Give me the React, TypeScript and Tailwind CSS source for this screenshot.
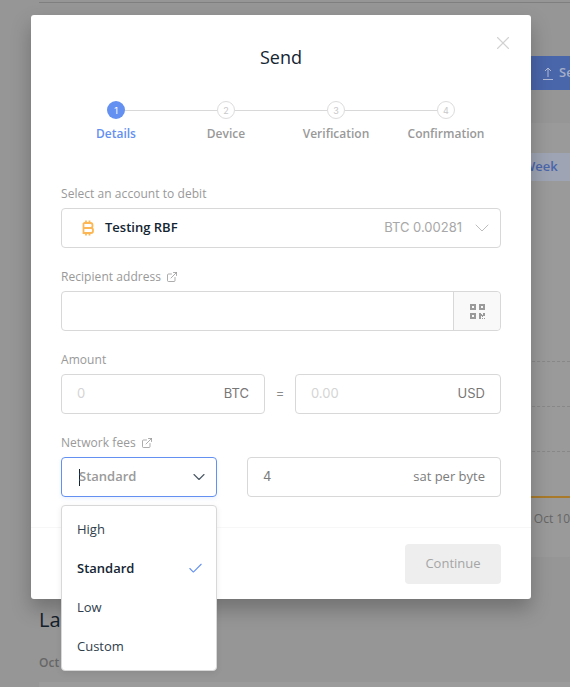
import { ExternalLink, ChevronDown, Check, X } from "lucide-react";

const font = "font-['Open_Sans','Noto_Sans',sans-serif]";
const inter = "font-['Inter','Liberation_Sans',sans-serif]";

function Step({ n, label, active, first, last }: { n: number; label: string; active?: boolean; first?: boolean; last?: boolean }) {
  return (
    <div className="relative flex w-[110px] flex-col items-center">
      {!first && <div className="absolute left-0 top-[8.5px] h-px w-[46px] bg-[#d8d8d8]" />}
      {!last && <div className="absolute right-0 top-[8.5px] h-px w-[46px] bg-[#d8d8d8]" />}
      <div
        className={
          active
            ? `flex h-[18px] w-[18px] items-center justify-center rounded-full bg-[#6490f1] text-[9px] leading-none text-white ${inter}`
            : `flex h-[18px] w-[18px] items-center justify-center rounded-full border border-[#dcdcdc] bg-white text-[9px] leading-none text-[#c8c8c8] ${inter}`
        }
      >
        {n}
      </div>
      <div className={active ? "mt-[7px] text-[12px] leading-[16px] font-semibold text-[#6490f1]" : "mt-[7px] text-[12px] leading-[16px] font-semibold text-[#999999]"}>
        {label}
      </div>
    </div>
  );
}

function Label({ text, link }: { text: string; link?: boolean }) {
  return (
    <div className="flex h-[16px] items-center gap-[5px] text-[12px] leading-[16px] tracking-[0.05px] text-[#999999]">
      {text}
      {link && <ExternalLink size={12} strokeWidth={1.4} className="text-[#8a8a8a]" />}
    </div>
  );
}

function Qr() {
  return (
    <svg width="15" height="15" viewBox="0 0 15 15" fill="#9a9a9a" fillRule="evenodd">
      <path d="M0 0h6v6H0zM2 2v2h2V2z" />
      <path d="M9 0h6v6H9zM11 2v2h2V2z" />
      <path d="M0 9h6v6H0zM2 11v2h2v-2z" />
      <path d="M9 9h2v1h1v1h1V9h2v3h-2v1h-1v-1h-1v3H9z" />
      <path d="M12 14h1v1h-1zM14 14h1v1h-1z" />
    </svg>
  );
}

export default function App() {
  return (
    <div className={`relative h-[687px] w-[570px] overflow-hidden bg-[#969696] ${font}`}>
      {/* page behind the overlay */}
      <div className="flex flex-col pl-[39px]">
        <div className="mt-[2px] h-px bg-[#7f7f7f]" />
        <div className="mt-[53px] flex h-[34px] items-center justify-end">
          <div className="-mr-[21px] flex h-[34px] w-[200px] shrink-0 items-center justify-end gap-[6px] bg-[#4a66ab] text-[13px] font-semibold text-[#a4aec8]">
            <svg width="10" height="13" viewBox="0 0 10 13" fill="none" stroke="#b1bad2" strokeWidth="1">
              <path d="M5 10V1M2 4l3-3 3 3M0 12.5h10" />
            </svg>
            <span className="w-[32px]">Send</span>
          </div>
        </div>
        <div className="mt-[33px] flex h-[434px] flex-col bg-[#9a9a9a]">
          <div className="mt-[30px] flex h-[28px] items-center justify-end">
            <div className="flex h-[28px] w-[120px] items-center bg-[#9fa4b4] pl-[73px] text-[13px] font-semibold text-[#4a66ab]">
              Week
            </div>
          </div>
          <div className="mt-[180px] h-0 border-t border-dashed border-[#888888]" />
          <div className="mt-[44px] h-0 border-t border-dashed border-[#888888]" />
          <div className="mt-[44px] h-0 border-t border-dashed border-[#888888]" />
          <div className="mt-[44px] h-[2px] bg-[#a87a2a]" />
          <div className="mt-[13px] text-right text-[12px] leading-[16px] whitespace-nowrap text-[#666666]">Oct 10</div>
        </div>
        <div className="mt-[49px] text-[20px] leading-[28px] whitespace-nowrap text-[#14202c]">Last operations</div>
        <div className="mt-[21px] text-[12px] leading-[16px] font-semibold text-[#666666]">Oct 10</div>
        <div className="mt-[11px] h-[30px] bg-[#9b9b9b]" />
      </div>

      {/* modal */}
      <div className="absolute left-[31px] top-[15px] flex h-[584px] w-[500px] flex-col rounded-[3px] bg-white shadow-[0_10px_20px_rgba(0,0,0,0.25)]">
        <X size={22} strokeWidth={1.2} className="absolute right-[17px] top-[17px] text-[#d2d2d2]" />
        <div className="mt-[30px] text-center text-[18px] leading-[25px] text-[#142533]">Send</div>
        <div className="mt-[31px] flex justify-center">
          <Step n={1} label="Details" active first />
          <Step n={2} label="Device" />
          <Step n={3} label="Verification" />
          <Step n={4} label="Confirmation" last />
        </div>

        <div className="mt-[44px] flex flex-col px-[30px]">
          <Label text="Select an account to debit" />
          <div className="mt-[6px] flex h-[40px] items-center rounded-[4px] border border-[#d8d8d8] pl-[20px] pr-[6px]">
            <svg width="12" height="16" viewBox="0 0 12 16" fill="none" stroke="#fcb653" strokeWidth="1.8">
              <path d="M1.5 3h7a2 2 0 0 1 2 2v1a2 2 0 0 1-2 2h-7M1.5 8h7.5a2 2 0 0 1 2 2v1a2 2 0 0 1-2 2h-7.5zM1.5 3v5M4 0.5v2.5M7.5 0.5v2.5M4 13v2.5M7.5 13v2.5" />
            </svg>
            <span className="ml-[11px] text-[13px] font-semibold text-[#142533]">Testing RBF</span>
            <span className={`ml-auto text-[13px] text-[#a8a8a8] ${inter}`}>BTC 0.00281</span>
            <ChevronDown size={24} strokeWidth={0.9} className="ml-[8px] text-[#b5b5b5]" />
          </div>

          <div className="mt-[21px]">
            <Label text="Recipient address" link />
          </div>
          <div className="mt-[6px] flex h-[40px] rounded-[4px] border border-[#d8d8d8]">
            <div className="flex-1" />
            <div className="flex w-[47px] items-center justify-center rounded-r-[4px] border-l border-[#d8d8d8] bg-[#f9f9f9]">
              <Qr />
            </div>
          </div>

          <div className="mt-[21px]">
            <Label text="Amount" />
          </div>
          <div className={`mt-[6px] flex items-center text-[13px] ${inter}`}>
            <div className="flex h-[40px] w-[204px] items-center justify-between rounded-[4px] border border-[#d8d8d8] px-[15px]">
              <span className="text-[#d4d4d4]">0</span>
              <span className="text-[#777777]">BTC</span>
            </div>
            <div className="w-[30px] text-center text-[#8a8a8a]">=</div>
            <div className="flex h-[40px] w-[206px] items-center justify-between rounded-[4px] border border-[#d8d8d8] px-[15px]">
              <span className="text-[#d4d4d4]">0.00</span>
              <span className="text-[#777777]">USD</span>
            </div>
          </div>

          <div className="mt-[21px]">
            <Label text="Network fees" link />
          </div>
          <div className="mt-[6px] flex gap-[30px]">
            <div className="flex h-[40px] w-[156px] items-center rounded-[4px] border border-[#6490f1] pl-[17px] pr-[7px] shadow-[0_2px_4px_rgba(100,144,241,0.12)]">
              <span className="h-[17px] w-px bg-[#142533]" />
              <span className="-ml-px text-[13px] font-semibold text-[#9a9a9a]">Standard</span>
              <ChevronDown size={20} strokeWidth={1.4} className="ml-auto text-[#4d5a66]" />
            </div>
            <div className="flex h-[40px] w-[254px] items-center justify-between rounded-[4px] border border-[#d8d8d8] px-[15px] text-[13px] text-[#7c7c7c]">
              <span className={inter}>4</span>
              <span>sat per byte</span>
            </div>
          </div>
        </div>

        <div className="mt-[30px] h-px bg-[#f7f7f7]" />
        <div className="mt-[16px] flex justify-end px-[30px]">
          <div className="flex h-[40px] w-[96px] items-center justify-center rounded-[4px] bg-[#eeeeee] text-[13px] font-medium text-[#a5a5a5]">
            Continue
          </div>
        </div>
      </div>

      {/* dropdown menu */}
      <div className="absolute left-[61px] top-[505px] flex h-[166px] w-[156px] flex-col rounded-[4px] border border-[#d8d8d8] bg-white py-[4px] text-[13px] text-[#2f3e4c] shadow-[0_2px_6px_rgba(0,0,0,0.08)]">
        <div className="flex h-[39px] items-center px-[15px]">High</div>
        <div className="flex h-[39px] items-center justify-between pl-[15px] pr-[12px] font-semibold text-[#142533]">
          Standard
          <Check size={17} strokeWidth={1.5} className="text-[#6490f1]" />
        </div>
        <div className="flex h-[39px] items-center px-[15px]">Low</div>
        <div className="flex h-[39px] items-center px-[15px]">Custom</div>
      </div>
    </div>
  );
}
